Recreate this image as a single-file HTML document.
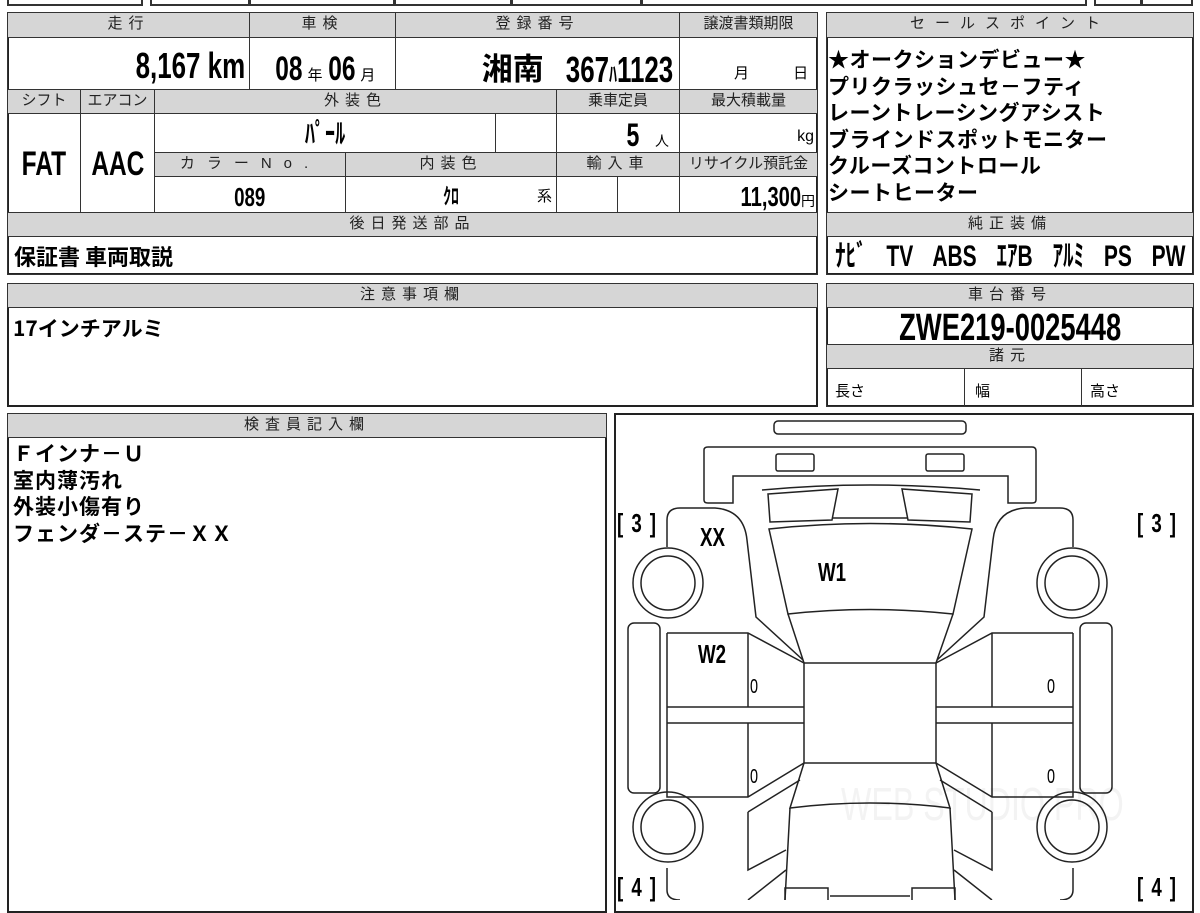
<!DOCTYPE html>
<html><head><meta charset="utf-8"><style>
body{margin:0;width:1200px;height:900px;background:#fff;position:relative;overflow:hidden;font-family:"Liberation Sans","Noto Sans CJK JP",sans-serif;color:#000}
.b{position:absolute;border:2px solid #222;box-sizing:border-box}
.c{position:absolute;border:1px solid #333;box-sizing:border-box;overflow:hidden;white-space:nowrap}
.h{background:#d6d6d6;font-size:15px;text-align:center;line-height:22px;letter-spacing:6px;color:#222}
.v{font-weight:bold}
.n{display:inline-block;transform:scaleX(.72)}
.r .n{transform-origin:right center}
.l .n{transform-origin:left center}
.j{font-family:"Noto Sans CJK JP",sans-serif;font-weight:bold}
</style></head><body>
<div class="c" style="left:7px;top:-20px;width:136px;height:26px;border-width:2px"></div>
<div class="c" style="left:150px;top:-20px;width:100px;height:26px;border-width:2px"></div>
<div class="c" style="left:249px;top:-20px;width:146px;height:26px;border-width:2px"></div>
<div class="c" style="left:394px;top:-20px;width:118px;height:26px;border-width:2px"></div>
<div class="c" style="left:511px;top:-20px;width:131px;height:26px;border-width:2px"></div>
<div class="c" style="left:641px;top:-20px;width:446px;height:26px;border-width:2px"></div>
<div class="c" style="left:1094px;top:-20px;width:48px;height:26px;border-width:2px"></div>
<div class="c" style="left:1141px;top:-20px;width:52px;height:26px;border-width:2px"></div>

<div class="b" style="left:7px;top:12px;width:811px;height:263px"></div>
<div class="c h" style="left:7px;top:12px;width:243px;height:26px">走行</div>
<div class="c h" style="left:249px;top:12px;width:147px;height:26px">車検</div>
<div class="c h" style="left:395px;top:12px;width:285px;height:26px">登録番号</div>
<div class="c h" style="left:679px;top:12px;width:139px;height:26px;letter-spacing:0">譲渡書類期限</div>
<div class="c v r" style="left:7px;top:37px;width:243px;height:53px;text-align:right;font-size:36px;line-height:56px;padding-right:4px"><span class="n">8,167 km</span></div>
<div class="c v" style="left:249px;top:37px;width:147px;height:53px;text-align:center;font-size:34px;line-height:62px"><span class="n">08</span><span style="font-size:15px;font-weight:normal">年</span><span class="n">06</span><span style="font-size:15px;font-weight:normal">月</span></div>
<div class="c v r" style="left:395px;top:37px;width:285px;height:53px;text-align:right;font-size:36px;line-height:62px;padding-right:6px"><span class="j" style="font-size:31px;position:relative;top:-2px">湘南</span> <span class="n" style="margin-left:-30px">367<span style="font-size:22px">ﾊ</span>1123</span></div>
<div class="c" style="left:679px;top:37px;width:139px;height:53px;font-size:15px;line-height:72px;padding-left:54px;word-spacing:40px">月 日</div>

<div class="c h" style="left:7px;top:89px;width:74px;height:25px;letter-spacing:0">シフト</div>
<div class="c h" style="left:80px;top:89px;width:75px;height:25px;letter-spacing:0">エアコン</div>
<div class="c h" style="left:154px;top:89px;width:403px;height:25px">外装色</div>
<div class="c h" style="left:556px;top:89px;width:124px;height:25px;letter-spacing:0">乗車定員</div>
<div class="c h" style="left:679px;top:89px;width:139px;height:25px;letter-spacing:0">最大積載量</div>
<div class="c v" style="left:7px;top:113px;width:74px;height:100px;text-align:center;font-size:34px;line-height:100px"><span class="n">FAT</span></div>
<div class="c v" style="left:80px;top:113px;width:75px;height:100px;text-align:center;font-size:34px;line-height:100px"><span class="n">AAC</span></div>
<div class="c v" style="left:154px;top:113px;width:342px;height:40px;text-align:center;font-size:28px;line-height:40px"><span class="n">ﾊﾟｰﾙ</span></div>
<div class="c" style="left:495px;top:113px;width:62px;height:40px"></div>
<div class="c v" style="left:556px;top:113px;width:124px;height:40px;text-align:right;font-size:32px;line-height:42px;padding-right:10px"><span class="n">5</span> <span style="font-size:14px;font-weight:normal">&nbsp;人</span></div>
<div class="c" style="left:679px;top:113px;width:139px;height:40px;text-align:right;font-size:16px;line-height:46px;padding-right:3px">kg</div>
<div class="c h" style="left:154px;top:152px;width:192px;height:25px;letter-spacing:12px">カラーNo.</div>
<div class="c h" style="left:345px;top:152px;width:212px;height:25px">内装色</div>
<div class="c h" style="left:556px;top:152px;width:124px;height:25px">輸入車</div>
<div class="c h" style="left:679px;top:152px;width:139px;height:25px;letter-spacing:0">リサイクル預託金</div>
<div class="c v" style="left:154px;top:176px;width:192px;height:37px;text-align:center;font-size:26px;line-height:40px"><span class="n">089</span></div>
<div class="c v" style="left:345px;top:176px;width:212px;height:37px;text-align:center;font-size:22px;line-height:40px"><span class="n">ｸﾛ</span><span style="position:absolute;right:4px;font-size:15px;font-weight:normal">系</span></div>
<div class="c" style="left:556px;top:176px;width:62px;height:37px"></div>
<div class="c" style="left:617px;top:176px;width:63px;height:37px"></div>
<div class="c v r" style="left:679px;top:176px;width:139px;height:37px;text-align:right;font-size:28px;line-height:40px;padding-right:2px"><span class="n">11,300</span><span style="font-size:14px;font-weight:normal">円</span></div>
<div class="c h" style="left:7px;top:212px;width:811px;height:25px">後日発送部品</div>
<div class="c j" style="left:7px;top:236px;width:811px;height:39px;font-size:22px;line-height:38px;padding-left:6px">保証書 車両取説</div>

<div class="b" style="left:826px;top:12px;width:368px;height:263px"></div>
<div class="c h" style="left:826px;top:12px;width:368px;height:26px;letter-spacing:10px">セールスポイント</div>
<div class="c j" style="left:826px;top:37px;width:368px;height:176px;font-size:21px;letter-spacing:0.5px;line-height:26.5px;padding-top:8px;padding-left:1px;white-space:pre">★オークションデビュー★
プリクラッシュセ－フティ
レーントレーシングアシスト
ブラインドスポットモニター
クルーズコントロール
シートヒーター</div>
<div class="c h" style="left:826px;top:212px;width:368px;height:25px">純正装備</div>
<div class="c v" style="left:826px;top:236px;width:368px;height:39px;font-size:30px;line-height:40px;text-align:center"><span class="n" style="transform:scaleX(.7);word-spacing:20px;margin:0 -80px">ﾅﾋﾞ TV ABS ｴｱB ｱﾙﾐ PS PW</span></div>

<div class="b" style="left:7px;top:283px;width:811px;height:124px"></div>
<div class="c h" style="left:7px;top:283px;width:811px;height:25px">注意事項欄</div>
<div class="j" style="position:absolute;left:13px;top:313px;font-size:21px">17インチアルミ</div>

<div class="b" style="left:826px;top:283px;width:368px;height:124px"></div>
<div class="c h" style="left:826px;top:283px;width:368px;height:25px">車台番号</div>
<div class="c v" style="left:826px;top:307px;width:368px;height:38px;text-align:center;font-size:38px;line-height:40px"><span class="n">ZWE219-0025448</span></div>
<div class="c h" style="left:826px;top:344px;width:368px;height:25px">諸元</div>
<div class="c" style="left:826px;top:368px;width:139px;height:39px;font-size:15px;line-height:46px;padding-left:8px">長さ</div>
<div class="c" style="left:964px;top:368px;width:118px;height:39px;font-size:15px;line-height:46px;padding-left:10px">幅</div>
<div class="c" style="left:1081px;top:368px;width:113px;height:39px;font-size:15px;line-height:46px;padding-left:8px">高さ</div>

<div class="b" style="left:7px;top:413px;width:600px;height:500px"></div>
<div class="c h" style="left:7px;top:413px;width:600px;height:25px">検査員記入欄</div>
<div class="j" style="position:absolute;left:13px;top:440px;font-size:21px;letter-spacing:1px;line-height:26.5px;white-space:pre">Ｆインナ－Ｕ
室内薄汚れ
外装小傷有り
フェンダ－ステ－ＸＸ</div>

<div class="b" style="left:614px;top:413px;width:580px;height:500px;overflow:hidden">
<div style="position:absolute;left:225px;top:362px;font-size:46px;color:#f3f3f3;transform:scaleX(.7);transform-origin:left;white-space:nowrap">WEB STUDIO PRO</div>
</div>
<svg style="position:absolute;left:0;top:0" width="1200" height="900" fill="none" stroke="#222" stroke-width="1.5">
<rect x="774" y="421" width="192" height="13" rx="4"/>
<path d="M704 450 Q704 447 708 447 L1032 447 Q1036 447 1036 451 L1036 500 Q1036 503 1032 503 L1008 503 L1008 476 L733 476 L733 503 L708 503 Q704 503 704 500 Z"/>
<rect x="776" y="454" width="38" height="17" rx="2"/>
<rect x="926" y="454" width="38" height="17" rx="2"/>
<path d="M762 490 Q870 480 980 490"/>
<path d="M768 494 L838 489 L832 520 L770 522 Z"/>
<path d="M972 494 L902 489 L908 520 L970 522 Z"/>
<path d="M833 518 L907 518"/>
<path d="M769 529 Q870 518 972 529 L953 614 Q870 605 788 614 Z"/>
<rect x="804" y="663" width="132" height="100"/>
<path d="M788 614 L804 663 M953 614 L936 663"/>
<path d="M804 763 L790 808 Q870 798 950 808 L936 763"/>
<path d="M790 808 L785 900 M950 808 L955 900"/>
<path d="M785 900 L785 888 L828 888 L828 900 M955 900 L955 888 L912 888 L912 900 M830 896 L910 896"/>
<g id="L">
<path d="M667 547 L667 520 Q667 508 680 508 L715 508 Q744 510 747 540 L756 617 L803 660"/>
<circle cx="668" cy="583" r="35"/><circle cx="668" cy="583" r="27"/>
<circle cx="668" cy="827" r="35"/><circle cx="668" cy="827" r="27"/>
<rect x="628" y="623" width="32" height="170" rx="6"/>
<path d="M667 633 L748 633 L804 663 M748 633 L748 707"/>
<path d="M667 707 L804 707 M667 723 L804 723"/>
<path d="M667 633 L667 797 L748 797 L804 763 M748 723 L748 797"/>
<path d="M748 812 L800 780 M748 812 L748 870 L786 850"/>
<path d="M667 868 L667 890 Q667 900 680 900 M748 900 L786 870"/>
</g>
<use href="#L" transform="translate(1740,0) scale(-1,1)"/>
</svg>
<div class="v l" style="position:absolute;left:617px;top:508px;font-size:26px;word-spacing:4px"><span class="n">[ 3 ]</span></div>
<div class="v l" style="position:absolute;left:1137px;top:508px;font-size:26px;word-spacing:4px"><span class="n">[ 3 ]</span></div>
<div class="v l" style="position:absolute;left:617px;top:872px;font-size:26px;word-spacing:4px"><span class="n">[ 4 ]</span></div>
<div class="v l" style="position:absolute;left:1137px;top:872px;font-size:26px;word-spacing:4px"><span class="n">[ 4 ]</span></div>
<div class="v l" style="position:absolute;left:700px;top:522px;font-size:26px"><span class="n">XX</span></div>
<div class="v l" style="position:absolute;left:818px;top:557px;font-size:26px"><span class="n">W1</span></div>
<div class="v l" style="position:absolute;left:698px;top:639px;font-size:26px"><span class="n">W2</span></div>
<div class="l" style="position:absolute;left:750px;top:676px;font-size:20px"><span class="n">0</span></div>
<div class="l" style="position:absolute;left:750px;top:766px;font-size:20px"><span class="n">0</span></div>
<div class="l" style="position:absolute;left:1047px;top:676px;font-size:20px"><span class="n">0</span></div>
<div class="l" style="position:absolute;left:1047px;top:766px;font-size:20px"><span class="n">0</span></div>
</body></html>
